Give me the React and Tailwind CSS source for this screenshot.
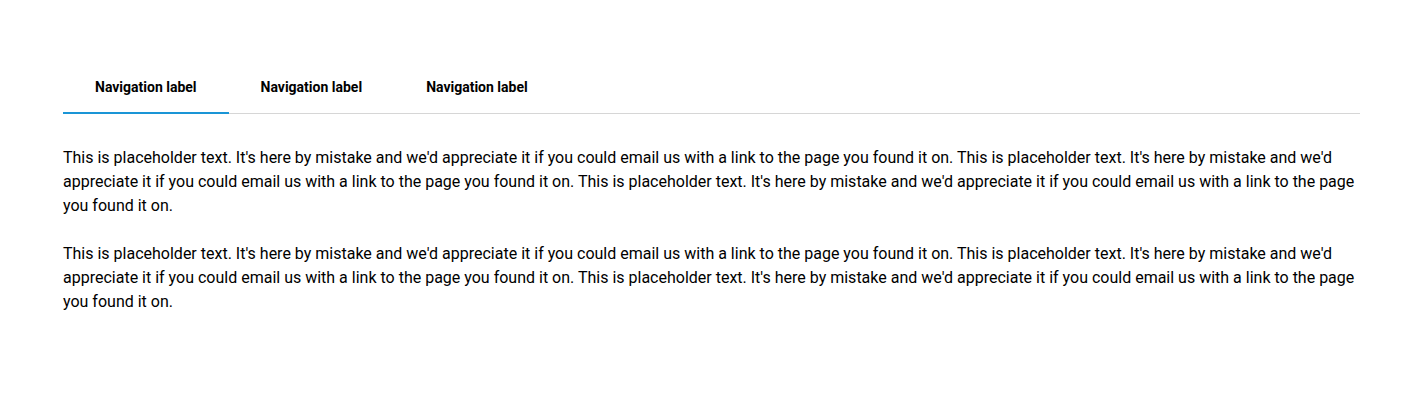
import React, { useState } from 'react';

const tabs = ['Navigation label', 'Navigation label', 'Navigation label'];

const copy =
  "This is placeholder text. It's here by mistake and we'd appreciate it if you could email us with a link to the page you found it on. This is placeholder text. It's here by mistake and we'd appreciate it if you could email us with a link to the page you found it on. This is placeholder text. It's here by mistake and we'd appreciate it if you could email us with a link to the page you found it on.";

export default function App() {
  const [active, setActive] = useState(0);

  return (
    <div className="min-h-[411px] bg-white px-[63px] pt-[60px] font-['Roboto',sans-serif] text-black">
      <div className="flex border-b border-[#d6d6d6]">
        {tabs.map((label, i) => (
          <button
            key={i}
            onClick={() => setActive(i)}
            className="relative h-[53px] px-[32px] text-[14px] font-bold leading-none text-black"
          >
            {label}
            {i === active && (
              <span className="absolute inset-x-0 -bottom-px h-[2px] bg-[#1a95d6]" />
            )}
          </button>
        ))}
      </div>

      <div className="mt-[32px] flex flex-col gap-6 text-[16px] leading-6">
        <p>{copy}</p>
        <p>{copy}</p>
      </div>
    </div>
  );
}
